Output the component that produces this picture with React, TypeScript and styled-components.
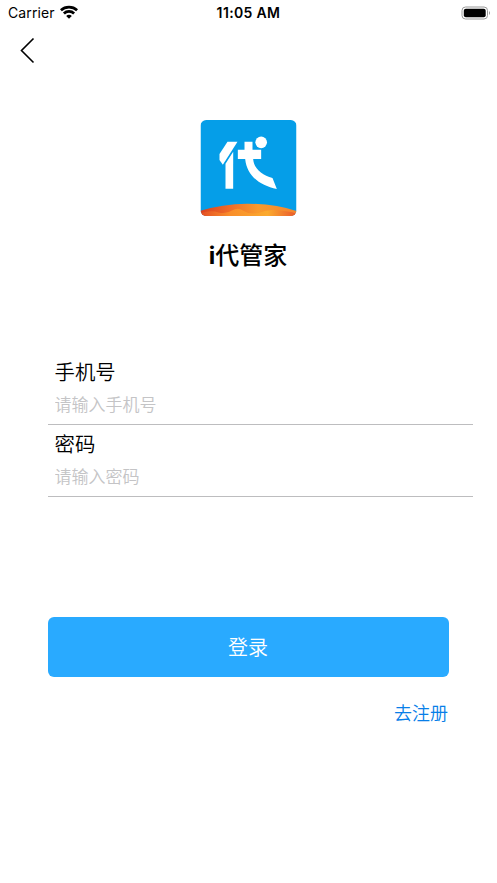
import React from "react";
import styled, { createGlobalStyle } from "styled-components";

const GlobalStyle = createGlobalStyle`
  * { box-sizing: border-box; }
  body {
    margin: 0;
    background: #fff;
    color: #000;
    font-family: Inter, "Noto Sans CJK SC", sans-serif;
  }
`;

const Screen = styled.main`
  display: flex;
  flex-direction: column;
  width: 497px;
  height: 883px;
  background: #fff;
  overflow: hidden;
`;

const StatusBar = styled.header`
  display: grid;
  grid-template-columns: 1fr auto 1fr;
  align-items: center;
  height: 26px;
  padding: 0 6px 0 8px;
`;

const Carrier = styled.div`
  display: flex;
  align-items: center;
  gap: 5px;
  font-size: 14px;
  line-height: 26px;
  letter-spacing: 0.1px;
  svg { display: block; margin-top: -2px; }
`;

const Clock = styled.time`
  margin-left: -2px;
  font-size: 14px;
  font-weight: 600;
  line-height: 26px;
  letter-spacing: 0.35px;
`;

const Battery = styled.svg`
  display: block;
  justify-self: end;
  margin-top: -1px;
`;

const NavBar = styled.nav`
  display: flex;
  height: 94px;
  padding: 11px 0 0 19px;
`;

const BackButton = styled.button`
  width: 18px;
  height: 28px;
  padding: 0;
  border: 0;
  background: none;
  svg { display: block; }
`;

const Brand = styled.section`
  display: flex;
  flex-direction: column;
  align-items: center;
  width: 496px;
  height: 236px;
`;

const Logo = styled.svg`
  display: block;
  width: 97px;
  height: 96px;
`;

const Title = styled.h1`
  margin: 21px 0 0;
  font-size: 24px;
  font-weight: 500;
  line-height: 37px;
  span { font-weight: 700; }
`;

const Form = styled.form`
  display: flex;
  flex-direction: column;
  padding: 0 24px 0 48px;
`;

const Field = styled.label`
  display: flex;
  flex-direction: column;
  height: 72px;
  padding: 5px 6.5px 0;
  border-bottom: 1px solid #bdbdbf;
  &:first-child { height: 69px; padding-top: 2px; }
`;

const FieldName = styled.span`
  font-size: 20.4px;
  font-weight: 350;
  line-height: 30px;
`;

const Input = styled.input`
  width: 100%;
  height: 33px;
  padding: 0;
  border: 0;
  outline: 0;
  background: none;
  font: 17px Inter, "Noto Sans CJK SC", sans-serif;
  &::placeholder { color: #c4c4c6; font-weight: 350; opacity: 1; }
`;

const Actions = styled.div`
  display: flex;
  flex-direction: column;
  align-items: flex-end;
  width: 401px;
  padding-top: 119.5px;
`;

const SubmitButton = styled.button`
  width: 401px;
  height: 60px;
  padding: 2px 1px 0 0;
  border: 0;
  border-radius: 6px;
  background: #29aaff;
  color: #fff;
  font: 350 20px/58px Inter, "Noto Sans CJK SC", sans-serif;
`;

const RegisterLink = styled.a`
  margin: 23px 1px 0 0;
  color: #087ee8;
  font-size: 18px;
  font-weight: 350;
  line-height: 27px;
  text-decoration: none;
`;

function WifiIcon() {
  return (
    <svg width="18" height="14" viewBox="0 0 18 14" fill="none" stroke="#000" strokeWidth="2.7">
      <path d="M.9 5.2C5.4 1 12.6 1 17.1 5.2" />
      <path d="M3.9 8.5C6.7 5.7 11.3 5.7 14.1 8.5" />
      <path d="M6.2 10.9C7.8 9.5 10.2 9.5 11.8 10.9L9 13.7Z" fill="#000" stroke="none" />
    </svg>
  );
}

function BrandLogo() {
  return (
    <Logo viewBox="18.5 18 291 288" role="img" aria-label="i代管家">
      <defs>
        <clipPath id="tile"><rect x="20" y="18" width="288" height="288" rx="17" /></clipPath>
        <linearGradient id="dune" x1="0" x2="1">
          <stop offset="0" stopColor="#d9411f" />
          <stop offset=".3" stopColor="#ef6b28" />
          <stop offset=".6" stopColor="#f99a2c" />
          <stop offset="1" stopColor="#f3852e" />
        </linearGradient>
        <linearGradient id="ridge" x1="0" x2="1">
          <stop offset="0" stopColor="#e44d24" />
          <stop offset=".3" stopColor="#f98d2a" />
          <stop offset=".7" stopColor="#fbaa2e" />
          <stop offset="1" stopColor="#e9572c" />
        </linearGradient>
      </defs>
      <g clipPath="url(#tile)">
        <path fill="#059ee8" d="M20 18H308V306H20Z" />
        <path fill="url(#dune)" d="M20 290Q85 270 160 269Q245 270 308 291V306H20Z" />
        <path fill="url(#ridge)" d="M20 298Q50 287 76 296Q100 300 116 289Q132 279 150 291Q167 302 194 297Q222 286 249 289Q284 291 308 299V306H20Z" />
        <path fill="#fff" d="M101 83H131L87 152L77 138V120Z" />
        <path fill="#fff" d="M118 113V224H95V149Z" />
        <path d="M89 154L119 107" stroke="#059ee8" strokeWidth="1.5" />
        <path fill="#fff" d="M152 83H176V107H202V135H178C180 164 205 184 236 192L249 225C198 215 159 185 154 135H132V107H152Z" />
        <circle cx="202" cy="85" r="17.5" fill="#fff" />
      </g>
    </Logo>
  );
}

export default function App() {
  return (
    <>
      <GlobalStyle />
      <Screen>
        <StatusBar>
          <Carrier>Carrier <WifiIcon /></Carrier>
          <Clock>11:05 AM</Clock>
          <Battery width="30" height="14" viewBox="0 0 30 14">
            <rect x="1" y="1" width="25.5" height="12" rx="3.5" fill="none" stroke="#999" />
            <rect x="2.8" y="2.8" width="21.9" height="8.4" rx="2" fill="#000" />
            <path d="M28 5Q30 7 28 9Z" fill="#999" />
          </Battery>
        </StatusBar>
        <NavBar>
          <BackButton type="button" aria-label="返回">
            <svg width="18" height="28" viewBox="0 0 18 28" fill="none" stroke="#000" strokeWidth="1.6">
              <path d="M14.5 1.5L2.5 13.5L14.5 25.5" />
            </svg>
          </BackButton>
        </NavBar>
        <Brand>
          <BrandLogo />
          <Title><span>i</span>代管家</Title>
        </Brand>
        <Form onSubmit={(event) => event.preventDefault()}>
          <Field>
            <FieldName>手机号</FieldName>
            <Input type="tel" placeholder="请输入手机号" />
          </Field>
          <Field>
            <FieldName>密码</FieldName>
            <Input type="password" placeholder="请输入密码" />
          </Field>
          <Actions>
            <SubmitButton type="submit">登录</SubmitButton>
            <RegisterLink>去注册</RegisterLink>
          </Actions>
        </Form>
      </Screen>
    </>
  );
}
